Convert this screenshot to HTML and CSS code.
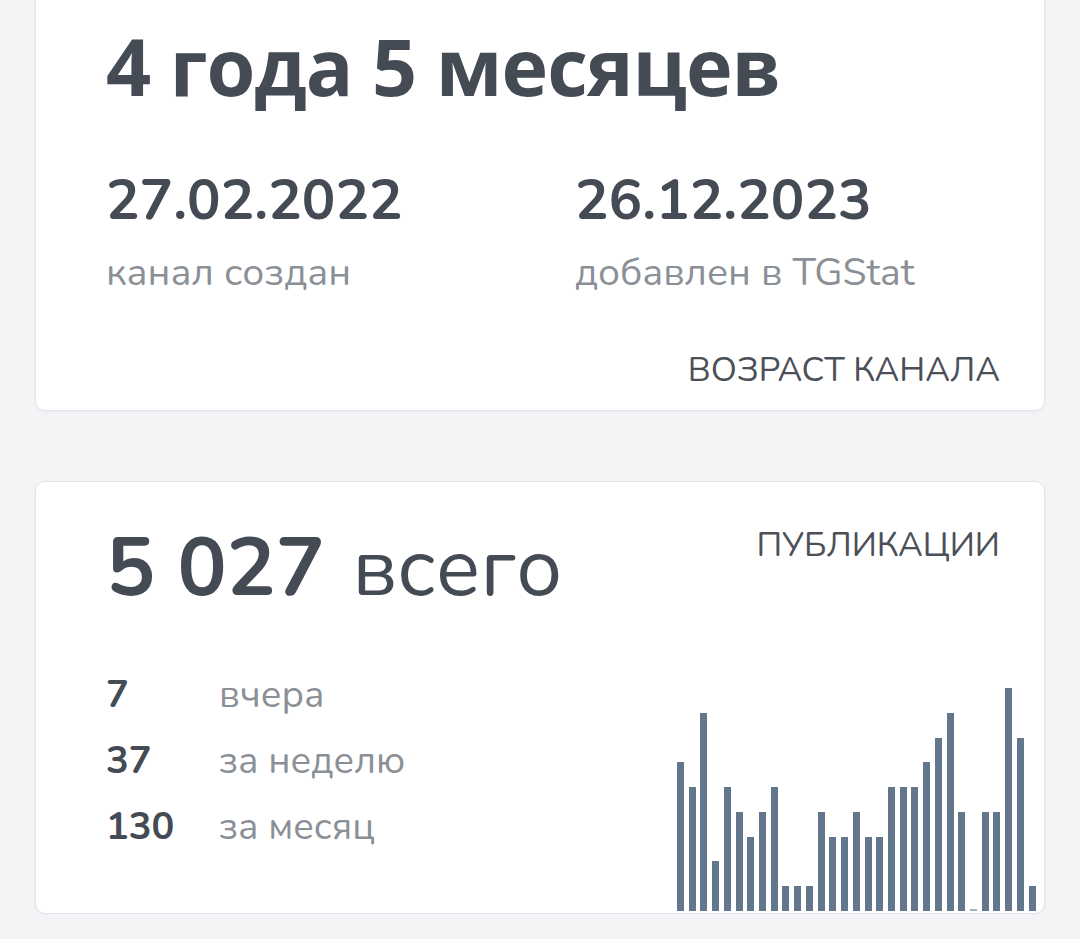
FILE: index.html
```html
<!DOCTYPE html>
<html lang="ru">
<head>
    <meta charset="UTF-8">
    <meta name="viewport" content="width=device-width, initial-scale=1.0">
    <title>Статистика канала</title>
    <link rel="stylesheet" href="styles.css">
</head>
<body>
    <div class="page">
        <div class="card age-card">
            <h1 class="age">4 года 5 месяцев</h1>

            <div class="dates">
                <div class="date">
                    <p class="date-value">27.02.2022</p>
                    <p class="date-label">канал создан</p>
                </div>
                <div class="date">
                    <p class="date-value">26.12.2023</p>
                    <p class="date-label">добавлен в TGStat</p>
                </div>
            </div>

            <div class="card-title">Возраст канала</div>
        </div>

        <div class="card posts-card">
            <div class="posts-head">
                <h2 class="total"><b>5 027</b> всего</h2>
                <div class="card-title">Публикации</div>
            </div>

            <div class="posts-body">
                <div class="stats">
                    <div class="stat"><span class="num">7</span><span class="what">вчера</span></div>
                    <div class="stat"><span class="num">37</span><span class="what">за неделю</span></div>
                    <div class="stat"><span class="num">130</span><span class="what">за месяц</span></div>
                </div>

                <!-- posts per day, last 31 days -->
                <div class="chart">
                    <div class="bar" style="height: 149px"></div>
                    <div class="bar" style="height: 124px"></div>
                    <div class="bar" style="height: 198px"></div>
                    <div class="bar" style="height: 50px"></div>
                    <div class="bar" style="height: 124px"></div>
                    <div class="bar" style="height: 99px"></div>
                    <div class="bar" style="height: 74px"></div>
                    <div class="bar" style="height: 99px"></div>
                    <div class="bar" style="height: 124px"></div>
                    <div class="bar" style="height: 25px"></div>
                    <div class="bar" style="height: 25px"></div>
                    <div class="bar" style="height: 25px"></div>
                    <div class="bar" style="height: 99px"></div>
                    <div class="bar" style="height: 74px"></div>
                    <div class="bar" style="height: 74px"></div>
                    <div class="bar" style="height: 99px"></div>
                    <div class="bar" style="height: 74px"></div>
                    <div class="bar" style="height: 74px"></div>
                    <div class="bar" style="height: 124px"></div>
                    <div class="bar" style="height: 124px"></div>
                    <div class="bar" style="height: 124px"></div>
                    <div class="bar" style="height: 149px"></div>
                    <div class="bar" style="height: 173px"></div>
                    <div class="bar" style="height: 198px"></div>
                    <div class="bar" style="height: 99px"></div>
                    <div class="bar empty"></div>
                    <div class="bar" style="height: 99px"></div>
                    <div class="bar" style="height: 99px"></div>
                    <div class="bar" style="height: 223px"></div>
                    <div class="bar" style="height: 173px"></div>
                    <div class="bar" style="height: 25px"></div>
                </div>
            </div>
        </div>
    </div>
</body>
</html>
```

FILE: styles.css
```css
*, *::before, *::after{
    margin: 0;
    padding: 0;
    box-sizing: border-box;
}

body{
    background-color: #f3f4f6;
    font-family: "Nunito", "Lato", sans-serif;
    color: #454b55;
    overflow: hidden;
}

.page{
    padding: 0 35px;
    margin-top: -20px;
}

.card{
    background-color: #fff;
    border: 1px solid #e1e4e8;
    border-radius: 10px;
    box-shadow: 0 1px 3px rgba(30, 40, 60, 0.05);
}

.card-title{
    font-size: 34px;
    line-height: 34px;
    text-transform: uppercase;
    color: #4b5058;
}

/* age card */
.age-card{
    padding: 45px 44px 23px 70px;
}
.age{
    font-family: "Open Sans", sans-serif;
    font-size: 79px;
    line-height: 79px;
    font-weight: 700;
    letter-spacing: -1px;
}
.dates{
    display: grid;
    grid-template-columns: 469px 1fr;
    margin-top: 68px;
}
.date-value{
    font-size: 56px;
    line-height: 56px;
    font-weight: 700;
}
.date-label{
    margin-top: 24px;
    font-size: 39px;
    line-height: 39px;
    color: #8b9097;
}
.age-card .card-title{
    margin-top: 61px;
    text-align: right;
}

/* posts card */
.posts-card{
    margin-top: 70px;
    padding: 45px 44px 2px 70px;
}
.posts-head{
    display: flex;
    justify-content: space-between;
    align-items: flex-start;
    margin-bottom: 53px;
}
.total{
    font-size: 82px;
    line-height: 82px;
    font-weight: 400;
}
.total b{
    font-weight: 700;
    margin-right: 6px;
}
.posts-head .card-title{
    margin-top: 1px;
}
.posts-body{
    display: flex;
    justify-content: space-between;
    align-items: flex-end;
}
.stats{
    margin-bottom: 51px;
}
.stat{
    display: flex;
    font-size: 38px;
    line-height: 66px;
}
.num{
    width: 113px;
    font-weight: 700;
}
.what{
    color: #8b9097;
}
.chart{
    display: flex;
    align-items: flex-end;
    gap: 4.73px;
    width: 360px;
    height: 223px;
    margin-right: -37px;
}
.bar{
    width: 7px;
    background-color: #62778c;
}
.bar.empty{
    height: 2px;
    background-color: #a9b3bd;
}
```
